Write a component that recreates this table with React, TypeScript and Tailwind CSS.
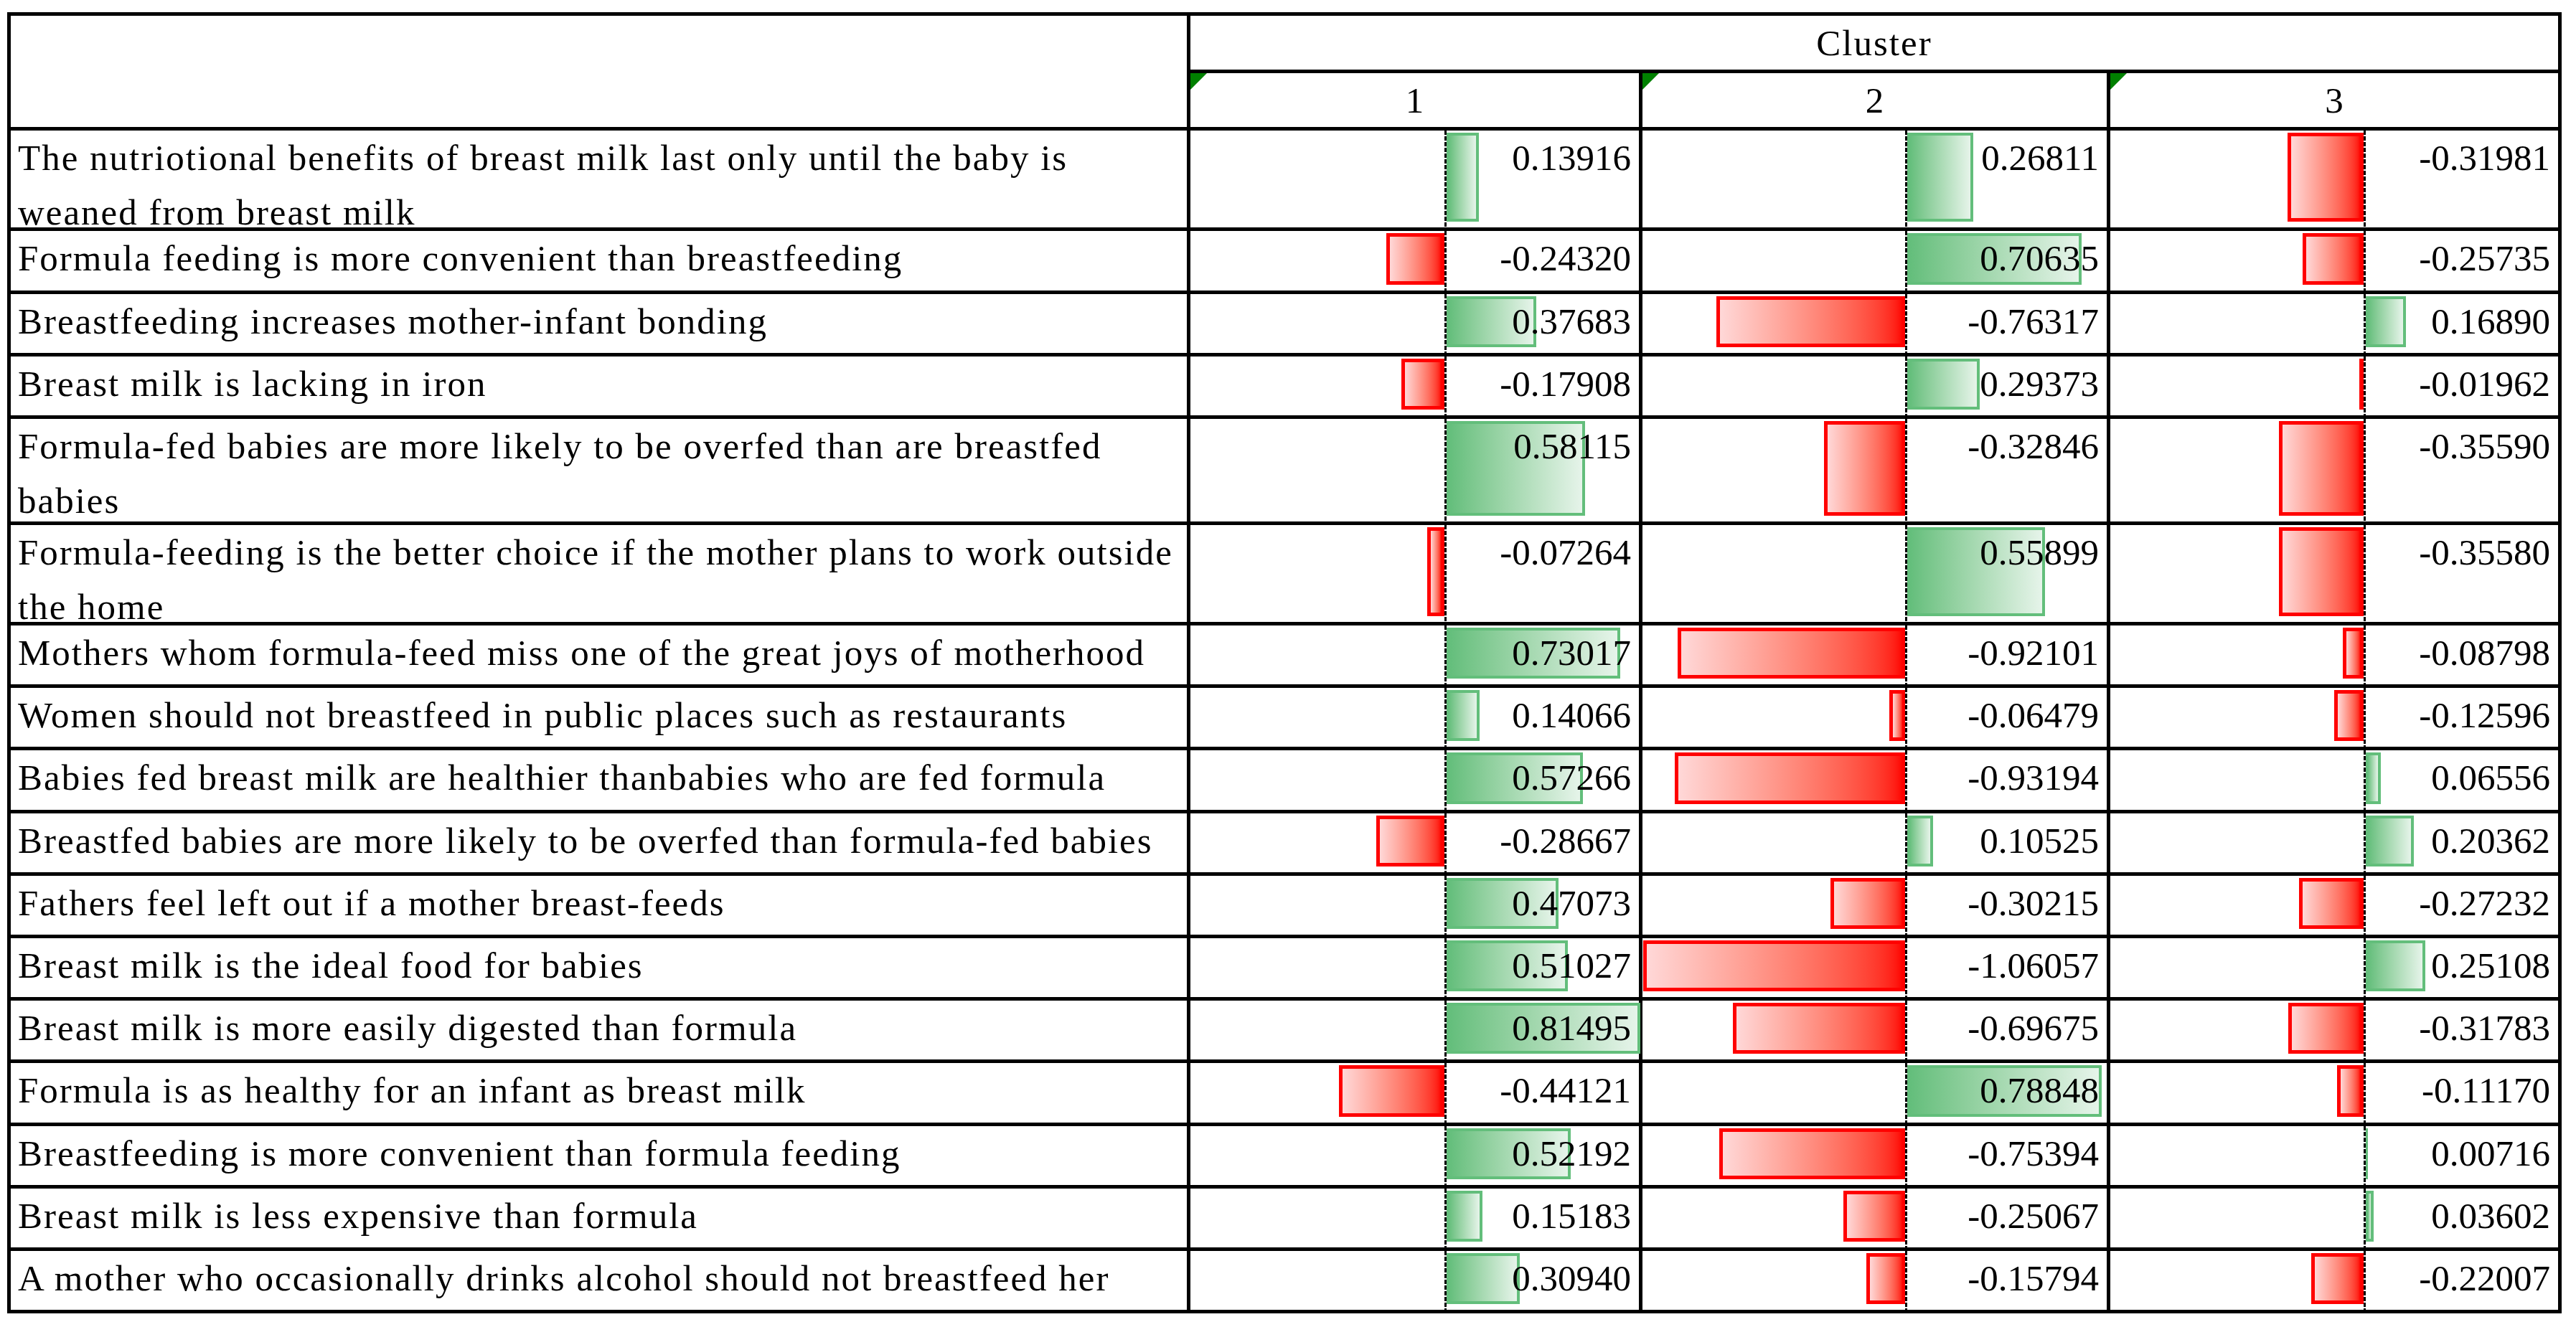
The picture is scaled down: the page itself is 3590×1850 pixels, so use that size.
import React from 'react';

type Row = {
    lines: string[];
    values: [number, number, number];
};

const rows: Row[] = [
    { lines: ['The nutriotional benefits of breast milk last only until the baby is', 'weaned from breast milk'], values: [0.13916, 0.26811, -0.31981] },
    { lines: ['Formula feeding is more convenient than breastfeeding'], values: [-0.2432, 0.70635, -0.25735] },
    { lines: ['Breastfeeding increases mother-infant bonding'], values: [0.37683, -0.76317, 0.1689] },
    { lines: ['Breast milk is lacking in iron'], values: [-0.17908, 0.29373, -0.01962] },
    { lines: ['Formula-fed babies are more likely to be overfed than are breastfed', 'babies'], values: [0.58115, -0.32846, -0.3559] },
    { lines: ['Formula-feeding is the better choice if the mother plans to work outside', 'the home'], values: [-0.07264, 0.55899, -0.3558] },
    { lines: ['Mothers whom formula-feed miss one of the great joys of motherhood'], values: [0.73017, -0.92101, -0.08798] },
    { lines: ['Women should not breastfeed in public places such as restaurants'], values: [0.14066, -0.06479, -0.12596] },
    { lines: ['Babies fed breast milk are healthier thanbabies who are fed formula'], values: [0.57266, -0.93194, 0.06556] },
    { lines: ['Breastfed babies are more likely to be overfed than formula-fed babies'], values: [-0.28667, 0.10525, 0.20362] },
    { lines: ['Fathers feel left out if a mother breast-feeds'], values: [0.47073, -0.30215, -0.27232] },
    { lines: ['Breast milk is the ideal food for babies'], values: [0.51027, -1.06057, 0.25108] },
    { lines: ['Breast milk is more easily digested than formula'], values: [0.81495, -0.69675, -0.31783] },
    { lines: ['Formula is as healthy for an infant as breast milk'], values: [-0.44121, 0.78848, -0.1117] },
    { lines: ['Breastfeeding is more convenient than formula feeding'], values: [0.52192, -0.75394, 0.00716] },
    { lines: ['Breast milk is less expensive than formula'], values: [0.15183, -0.25067, 0.03602] },
    { lines: ['A mother who occasionally drinks alcohol should not breastfeed her'], values: [0.3094, -0.15794, -0.22007] },
];

// content widths of the three cluster columns
const colWidths = [625, 647, 624];
const AXIS = 56.8; // % from the left of the cell
const SCALE = 53.3; // % of cell width per unit

const Corner: React.FC = () => (
    <svg className="absolute top-0 left-0" width="23" height="23" viewBox="0 0 23 23">
        <polygon points="0,0 23,0 0,23" fill="#008000" />
    </svg>
);

const ValueCell: React.FC<{ value: number; col: number }> = ({ value, col }) => {
    const pct = Math.abs(value) * SCALE;
    const px = (pct / 100) * colWidths[col];
    const thin = px < 10;
    const positive = value >= 0;

    return (
        <div className="relative bg-white">
            {positive ? (
                <div
                    className={`absolute top-[3px] bottom-[8px] bg-linear-to-r from-[#63be7b] to-[#e6f4ea] border-[#63be7b] ${thin ? 'border-[2px]' : 'border-[4px]'}`}
                    style={{ left: `calc(${AXIS}% + 1px)`, width: `${Math.max(px, 3)}px` }}
                />
            ) : (
                <div
                    className={`absolute top-[3px] bottom-[8px] bg-linear-to-r from-[#ffd8d8] to-[#ff0000] border-[#ff0000] ${thin ? 'border-[3px]' : 'border-[5px]'}`}
                    style={{ right: `calc(${100 - AXIS}% + 1px)`, width: `${Math.max(px, 3)}px` }}
                />
            )}
            <div
                className="absolute inset-y-0 w-[3px] bg-[repeating-linear-gradient(to_bottom,#000_0px,#000_6px,#fff_6px,#fff_8px)]"
                style={{ left: `calc(${AXIS}% - 1.5px)` }}
            />
            <div className="relative text-right pr-[11px]">{value.toFixed(5)}</div>
        </div>
    );
};

const App: React.FC = () => {
    return (
        <div className="min-h-screen bg-white pt-[17px] pl-[10px] font-['Liberation_Serif',serif] text-[51px] leading-[76px] text-black">
            <div className="grid w-fit grid-cols-[1639px_625px_647px_624px] grid-rows-[75px_75px_135px_83px_82px_82px_143px_135px_repeat(11,82.2px)] gap-[5px] bg-black p-[5px]">
                <div className="row-span-2 bg-white" />
                <div className="col-span-3 bg-white text-center tracking-[2px]">Cluster</div>
                {[1, 2, 3].map(n => (
                    <div key={n} className="relative bg-white text-center">
                        <Corner />
                        {n}
                    </div>
                ))}
                {rows.map((row, i) => (
                    <React.Fragment key={i}>
                        <div className="bg-white pl-[10px] tracking-[2px] whitespace-nowrap">
                            {row.lines.map((line, j) => (
                                <div key={j}>{line}</div>
                            ))}
                        </div>
                        {row.values.map((v, c) => (
                            <ValueCell key={c} value={v} col={c} />
                        ))}
                    </React.Fragment>
                ))}
            </div>
        </div>
    );
};

export default App;
